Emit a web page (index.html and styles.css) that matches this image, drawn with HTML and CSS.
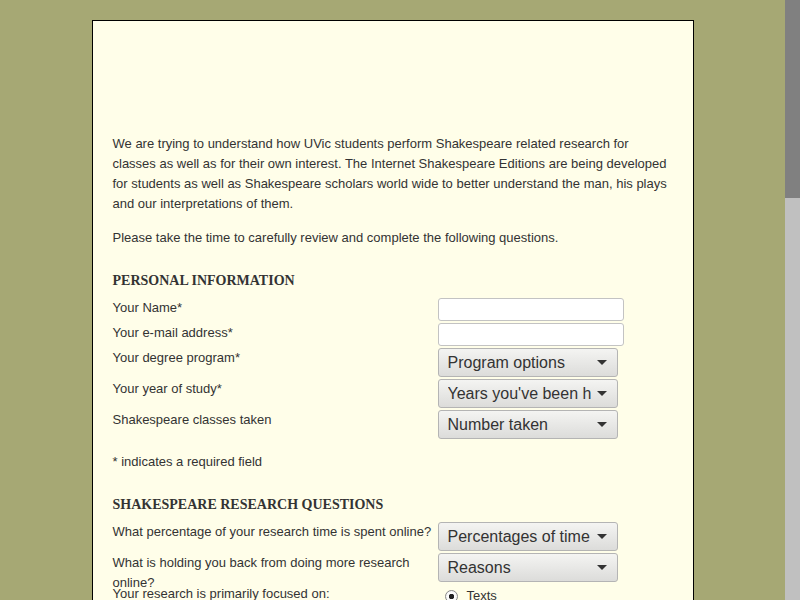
FILE: index.html
```html
<!DOCTYPE html>
<html lang="en">
<head>
<meta charset="utf-8">
<title>Shakespeare Research Survey</title>
<link rel="stylesheet" href="styles.css">
</head>
<body>
<div class="viewport">
<div class="page">
  <div class="banner"></div>
  <p class="intro">We are trying to understand how UVic students perform Shakespeare related research for classes as well as for their own interest. The Internet Shakespeare Editions are being developed for students as well as Shakespeare scholars world wide to better understand the man, his plays and our interpretations of them.</p>
  <p class="intro">Please take the time to carefully review and complete the following questions.</p>

  <h2 class="section">Personal Information</h2>
  <form class="form">
    <div class="row row-input">
      <label class="label">Your Name*</label>
      <div class="field"><input class="text" type="text"></div>
    </div>
    <div class="row row-input">
      <label class="label">Your e-mail address*</label>
      <div class="field"><input class="text" type="text"></div>
    </div>
    <div class="row row-select">
      <label class="label">Your degree program*</label>
      <div class="field"><span class="select-wrap"><select class="select"><option>Program options</option></select></span></div>
    </div>
    <div class="row row-select">
      <label class="label">Your year of study*</label>
      <div class="field"><span class="select-wrap"><select class="select"><option>Years you've been here</option></select></span></div>
    </div>
    <div class="row row-select">
      <label class="label">Shakespeare classes taken</label>
      <div class="field"><span class="select-wrap"><select class="select"><option>Number taken</option></select></span></div>
    </div>
    <p class="note">* indicates a required field</p>

    <h2 class="section">Shakespeare Research Questions</h2>
    <div class="row row-select">
      <label class="label">What percentage of your research time is spent online?</label>
      <div class="field"><span class="select-wrap"><select class="select"><option>Percentages of time</option></select></span></div>
    </div>
    <div class="row row-select">
      <label class="label">What is holding you back from doing more research online?</label>
      <div class="field"><span class="select-wrap"><select class="select"><option>Reasons</option></select></span></div>
    </div>
    <div class="row row-radio">
      <label class="label">Your research is primarily focused on:</label>
      <div class="field radios">
        <label class="radio"><input class="radio-input" type="radio" name="focus" checked>Texts</label>
        <label class="radio"><input class="radio-input" type="radio" name="focus">Performance</label>
        <label class="radio"><input class="radio-input" type="radio" name="focus">Criticism</label>
        <label class="radio"><input class="radio-input" type="radio" name="focus">Historical context</label>
        <label class="radio"><input class="radio-input" type="radio" name="focus">Other</label>
      </div>
    </div>
    <div class="row row-select">
      <label class="label">Which online resources do you use most?</label>
      <div class="field"><span class="select-wrap"><select class="select"><option>Resources</option></select></span></div>
    </div>
    <div class="row row-select">
      <label class="label">How often do you use the library catalogue?</label>
      <div class="field"><span class="select-wrap"><select class="select"><option>Frequency</option></select></span></div>
    </div>
    <div class="row row-select">
      <label class="label">Have you used the Internet Shakespeare Editions?</label>
      <div class="field"><span class="select-wrap"><select class="select"><option>Yes / No</option></select></span></div>
    </div>
    <div class="row row-area">
      <label class="label">What features would make online research easier for you?</label>
      <div class="field"><textarea class="area"></textarea></div>
    </div>
    <div class="row row-area">
      <label class="label">Any other comments?</label>
      <div class="field"><textarea class="area"></textarea></div>
    </div>
    <div class="actions">
      <button class="button" type="button">Submit</button>
      <button class="button" type="button">Reset</button>
    </div>
  </form>
  <p class="footer-note">Thank you for taking the time to complete this survey.</p>
</div>
</div>
<div class="scrollbar"><div class="thumb"></div></div>
</body>
</html>
```

FILE: styles.css
```css
html {
  background: #a6a874;
}
body {
  margin: 0;
  height: 100vh;
  display: flex;
  overflow: hidden;
  font-family: "Liberation Sans", Arial, sans-serif;
  font-size: 13px;
  color: #333333;
}
.viewport {
  flex: 1;
  min-width: 0;
  overflow: hidden;
  padding-top: 20px;
}
.scrollbar {
  width: 15px;
  flex: none;
  background: #c0c0c0;
}
.thumb {
  height: 198px;
  background: #808080;
}
.page {
  width: 560px;
  margin: 0 auto;
  padding: 0 20px 40px;
  background: #fffee9;
  border: 1px solid #000000;
  min-height: 1700px;
}
.banner {
  height: 113px;
}
.intro {
  margin: 0 0 14px;
  line-height: 20px;
}
.section {
  margin: 24px 0 8px;
  font-family: "Liberation Serif", "Times New Roman", serif;
  font-size: 14px;
  line-height: 18px;
  font-weight: bold;
  text-transform: uppercase;
  color: #333333;
}
.form {
  margin: 0;
}
.row {
  display: flex;
  align-items: flex-start;
}
.row-input {
  height: 25px;
}
.row-select {
  height: 31px;
}
.row-area {
  margin-top: 8px;
}
.label {
  width: 325px;
  flex: none;
  line-height: 20px;
}
.field {
  flex: 1;
}
.text {
  display: block;
  box-sizing: border-box;
  width: 186px;
  height: 23px;
  margin: 0;
  padding: 2px 4px;
  border: 1px solid #c3c3c3;
  border-radius: 3px;
  background: #ffffff;
  font: 13px "Liberation Sans", Arial, sans-serif;
}
.select-wrap {
  position: relative;
  display: inline-block;
}
.select-wrap::after {
  content: "";
  position: absolute;
  right: 11px;
  top: 12px;
  border-left: 5px solid transparent;
  border-right: 5px solid transparent;
  border-top: 5px solid #333333;
  pointer-events: none;
}
.select {
  -webkit-appearance: none;
  appearance: none;
  box-sizing: border-box;
  display: block;
  width: 180px;
  height: 29px;
  margin: 0;
  padding: 0 26px 0 9px;
  border: 1px solid #b4b4b4;
  border-radius: 3px;
  background: linear-gradient(#f4f4f2, #dcdcda);
  color: #333333;
  font: 16px "Liberation Sans", Arial, sans-serif;
  line-height: 27px;
}
.note {
  margin: 11px 0 0;
  line-height: 20px;
}
.radios {
  display: flex;
  flex-direction: column;
}
.radio {
  display: flex;
  align-items: center;
  line-height: 20px;
  margin-top: 2px;
}
.radio-input {
  -webkit-appearance: none;
  appearance: none;
  box-sizing: border-box;
  width: 13px;
  height: 13px;
  margin: 0 9px 0 7px;
  border: 1px solid #8a8a8a;
  border-radius: 50%;
  background: radial-gradient(circle, #ffffff 0, #ececec 100%);
}
.radio-input:checked {
  background: radial-gradient(circle, #222222 0, #222222 2.5px, #ffffff 3px, #ececec 100%);
}
.area {
  box-sizing: border-box;
  width: 186px;
  height: 80px;
  border: 1px solid #c3c3c3;
  border-radius: 3px;
  font: 13px "Liberation Sans", Arial, sans-serif;
}
.actions {
  margin-top: 20px;
  padding-left: 325px;
  display: flex;
  gap: 8px;
}
.button {
  font: 16px "Liberation Sans", Arial, sans-serif;
  color: #333333;
  height: 29px;
  padding: 0 14px;
  border: 1px solid #b4b4b4;
  border-radius: 3px;
  background: linear-gradient(#f4f4f2, #dcdcda);
}
.footer-note {
  margin: 30px 0 0;
  line-height: 20px;
}
```
